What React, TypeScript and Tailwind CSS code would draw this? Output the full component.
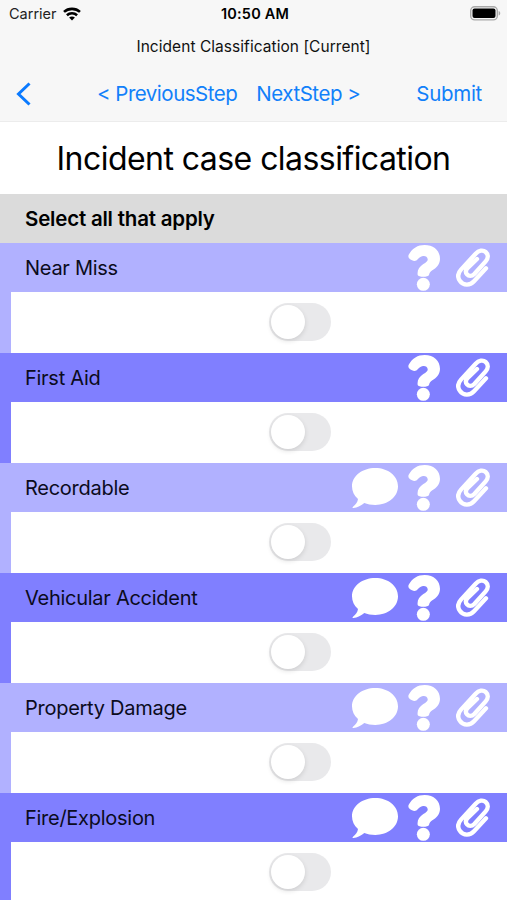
import { useState } from 'react';

type Item = {
  label: string;
  comment?: boolean;
};

const items: Item[] = [
  { label: 'Near Miss' },
  { label: 'First Aid' },
  { label: 'Recordable', comment: true },
  { label: 'Vehicular Accident', comment: true },
  { label: 'Property Damage', comment: true },
  { label: 'Fire/Explosion', comment: true },
];

function WifiIcon() {
  return (
    <svg width="18" height="14" viewBox="0 0 18 14" fill="none" stroke="#000" strokeWidth="2.6">
      <path d="M1 4.9C5.4 0.9 12.6 0.9 17 4.9" />
      <path d="M3.9 8.2C6.8 5.6 11.2 5.6 14.1 8.2" />
      <path d="M9 13.5L6.1 10.6C7.6 9 10.4 9 11.9 10.6Z" fill="#000" stroke="none" />
    </svg>
  );
}

function BatteryIcon() {
  return (
    <svg width="31" height="15" viewBox="0 0 31 15">
      <rect x="0.7" y="0.7" width="26.6" height="13.2" rx="4" fill="#f7f7f7" stroke="#a9a9a9" strokeWidth="1.4" />
      <rect x="2.5" y="2.5" width="23" height="9.6" rx="2" fill="#000" />
      <path d="M28.6 5C30.8 5.6 30.8 9 28.6 9.6Z" fill="#a9a9a9" />
    </svg>
  );
}

function CommentIcon() {
  return (
    <svg className="mt-px" width="46" height="40" viewBox="0 0 138 120" fill="#fff">
      <path d="M70 0C108 0 138 24 138 55C138 87 108 111 70 111C57 111 46 109 37 105C28 113 16 119 4 120C1 120 1 118 3 116C11 110 17 103 18 93C6 83 0 70 0 55C0 24 31 0 70 0Z" />
    </svg>
  );
}

function QuestionIcon() {
  return (
    <svg width="32" height="46" viewBox="0 0 96 138" fill="#fff">
      <path d="M3 28C13 10 29 0 50 0C78 0 96 18 96 41C96 58 85 68 74 75C66 80 64 85 63 90C61 97 31 97 29 90C27 75 34 65 46 57C55 52 60 48 59 42C58 35 52 32 45 33C38 34 33 38 29 43C25 49 18 49 12 46C3 42 -2 36 3 28Z" />
      <circle cx="46" cy="118" r="19.5" />
    </svg>
  );
}

function ClipIcon() {
  return (
    <svg
      width="34"
      height="39"
      viewBox="0 0 102 117"
      fill="none"
      stroke="#fff"
      strokeWidth="13"
      strokeLinecap="round"
      strokeLinejoin="round"
    >
      <path d="M90 61L54 100C42 113 22 113 12 99C4 88 5 76 15 65L59 17C68 7 81 5 89 12C98 20 97 31 89 40L55 78C47 86 38 85 33 79C28 73 29 66 35 60L63 33" />
    </svg>
  );
}

function Toggle({ on, onToggle, label }: { on: boolean; onToggle: () => void; label: string }) {
  return (
    <button
      type="button"
      role="switch"
      aria-checked={on}
      aria-label={label}
      onClick={onToggle}
      className={`w-[62px] h-[38px] rounded-full p-0.5 flex items-center transition-colors ${
        on ? 'bg-[#34c759] justify-end' : 'bg-[#e9e9eb] justify-start'
      }`}
    >
      <span className="size-[34px] rounded-full bg-white shadow-[0_2px_5px_rgba(0,0,0,0.12)]" />
    </button>
  );
}

export default function App() {
  const [selected, setSelected] = useState<string[]>([]);

  const toggle = (label: string) => {
    setSelected(prev => (prev.includes(label) ? prev.filter(l => l !== label) : [...prev, label]));
  };

  return (
    <main className="w-full h-[900px] overflow-hidden bg-white font-['Inter',sans-serif] text-black">
      <header className="h-[122px] bg-[#f7f7f7] border-b border-[#ececec]">
        {/* Status bar */}
        <div className="grid grid-cols-3 items-center h-[27px] pl-[9px] pr-[6px]">
          <div className="flex items-center gap-1.5 text-[14.5px] text-[#222]">
            <span>Carrier</span>
            <WifiIcon />
          </div>
          <div className="text-center text-[14.5px] font-semibold tracking-[0.2px]">10:50 AM</div>
          <div className="flex justify-end">
            <BatteryIcon />
          </div>
        </div>

        <div className="h-10 flex items-center justify-center text-[15.5px] tracking-[0.05px] text-[#111]">
          Incident Classification [Current]
        </div>

        {/* Step navigation */}
        <nav className="h-[54px] flex items-center pl-4 pr-[25px] text-[20.5px] tracking-[-0.3px] text-[#1180fa]">
          <button type="button" aria-label="Back" className="w-[81px]">
            <svg width="16" height="24" viewBox="0 0 16 24" fill="none" stroke="#0a7aff" strokeWidth="3">
              <path d="M13.5 1.5L2.5 12L13.5 22.5" />
            </svg>
          </button>
          <button type="button" className="pt-px whitespace-nowrap tracking-[-0.5px]">&lt; PreviousStep</button>
          <button type="button" className="pt-px ml-[19px] whitespace-nowrap tracking-[-0.45px]">NextStep &gt;</button>
          <button type="button" className="pt-px ml-auto">Submit</button>
        </nav>
      </header>

      <h1 className="h-[72px] pt-px flex items-center justify-center text-[32px] tracking-[-0.55px] whitespace-nowrap">
        Incident case classification
      </h1>
      <h2 className="h-[49px] pt-0.5 flex items-center pl-[25px] bg-[#dbdbdb] text-[20.5px] tracking-[-0.2px] font-semibold">
        Select all that apply
      </h2>

      {items.map((item, i) => (
        <section key={item.label} className={`h-[110px] ${i % 2 ? 'bg-[#807fff]' : 'bg-[#b1b1ff]'}`}>
          <div className="h-[49px] flex items-center justify-between pl-[25px] pr-[17px]">
            <span className="text-[20px] tracking-[-0.27px] text-[#0b0b20]">{item.label}</span>
            <div className="flex items-center">
              {item.comment && <CommentIcon />}
              <span className="ml-[10px] mr-4">
                <QuestionIcon />
              </span>
              <ClipIcon />
            </div>
          </div>
          <div className="ml-[11px] h-[61px] pb-px bg-white flex items-center justify-center">
            <div className="ml-[82px]">
              <Toggle on={selected.includes(item.label)} onToggle={() => toggle(item.label)} label={item.label} />
            </div>
          </div>
        </section>
      ))}
    </main>
  );
}
